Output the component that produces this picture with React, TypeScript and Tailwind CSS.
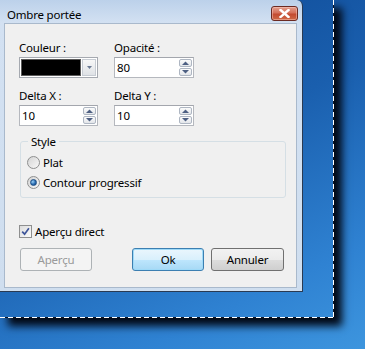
import type { ReactNode } from "react";

const txt = "text-[11.5px] leading-[15px] tracking-[-0.2px]";

function Arrow({ up }: { up?: boolean }) {
  return (
    <svg width="7" height="4" viewBox="0 0 7 4" className="block">
      {up ? (
        <path d="M0 4 L3.5 0.5 L7 4Z" fill="#4d5f82" />
      ) : (
        <path d="M0 0 L3.5 3.5 L7 0Z" fill="#4d5f82" />
      )}
    </svg>
  );
}

function SpinBox({ value }: { value: string }) {
  return (
    <div className="flex h-[21px] items-stretch border border-[#b5b8be] border-t-[#a3a6ad] bg-white">
      <span className={`flex-1 pl-[2px] text-black ${txt} leading-[19px]`}>{value}</span>
      <div className="flex flex-col justify-center gap-px py-px pr-px">
        <div className="flex h-[8px] w-[13px] items-center justify-center rounded-[2px] border border-[#aeb6c2] bg-[linear-gradient(to_bottom,#fbfbfb,#e3e6ea)]">
          <Arrow up />
        </div>
        <div className="flex h-[8px] w-[13px] items-center justify-center rounded-[2px] border border-[#aeb6c2] bg-[linear-gradient(to_bottom,#fbfbfb,#e3e6ea)]">
          <Arrow />
        </div>
      </div>
    </div>
  );
}

function Field({ label, children }: { label: string; children: ReactNode }) {
  return (
    <div className="flex flex-col">
      <span className={`text-black ${txt}`}>{label}</span>
      <div className="mt-[2px]">{children}</div>
    </div>
  );
}

function Radio({ checked, label }: { checked?: boolean; label: string }) {
  return (
    <div className="flex h-[15px] items-center gap-[3px]">
      <span className="flex h-[13px] w-[13px] items-center justify-center rounded-full border border-[#8e8f8f] bg-[linear-gradient(135deg,#d4d4d4,#f8f8f8)]">
        {checked && (
          <span className="h-[7px] w-[7px] rounded-full border border-[#1d4f86] bg-[radial-gradient(circle_at_35%_35%,#9bd0f5,#2a6db3_55%,#133f75)]" />
        )}
      </span>
      <span className={`text-black ${txt}`}>{label}</span>
    </div>
  );
}

function Button({
  children,
  variant,
  className,
}: {
  children: ReactNode;
  variant: "normal" | "default" | "disabled";
  className?: string;
}) {
  const look = {
    normal:
      "border-[#707070] bg-[linear-gradient(to_bottom,#f2f2f2_0%,#ebebeb_50%,#dddddd_51%,#cfcfcf_100%)] text-black",
    default:
      "border-[#3c7fb1] bg-[linear-gradient(to_bottom,#eaf6fd_0%,#d9f0fc_50%,#bee6fd_51%,#a7d9f5_100%)] text-black shadow-[inset_0_0_0_1px_#9fdaf8]",
    disabled: "border-[#adb2b5] bg-[#f4f4f4] text-[#9a9a9a]",
  }[variant];
  return (
    <div
      className={`flex h-[23px] items-center justify-center rounded-[3px] border ${txt} ${look} ${className ?? ""}`}
    >
      {children}
    </div>
  );
}

export default function App() {
  return (
    <div className="relative h-[349px] w-[365px] overflow-hidden bg-[linear-gradient(155deg,#0c4590_0%,#1a5fae_45%,#2f82d2_80%,#3d95de_100%)] font-['Noto_Sans',sans-serif]">
      {/* selection rectangle with drop shadow */}
      <div className="absolute left-0 top-0 h-[318px] w-[334px] shadow-[8px_8px_8px_rgba(2,8,20,1)]">
        <div className="absolute right-0 top-0 h-full w-px bg-[repeating-linear-gradient(to_bottom,#ffffff_0_5px,#0b1526_5px_8px)]" />
        <div className="absolute bottom-0 left-0 h-px w-full bg-[repeating-linear-gradient(to_right,#ffffff_0_5px,#0b1526_5px_8px)]" />
      </div>

      {/* dialog window */}
      <div className="absolute left-0 top-0 flex h-[292px] w-[303px] flex-col rounded-tr-[6px] border-b border-r border-[#2a3a52] bg-[linear-gradient(to_bottom,#bcd1ea_0px,#d3e1f2_23px,#cfdeef_100%)]">
        {/* title bar */}
        <div className="flex h-[23px] items-start justify-between pl-[7px]">
          <span className={`mt-[7px] text-black ${txt}`}>Ombre portée</span>
          <div className="mr-[4px] mt-[6px] flex h-[15px] w-[27px] items-center justify-center rounded-[3px] border border-[#6b2a22] bg-[linear-gradient(to_bottom,#e3a08f_0%,#d5705a_45%,#c34a30_55%,#cf6a48_100%)] shadow-[inset_0_0_0_1px_rgba(255,210,200,0.45)]">
            <svg width="11" height="9" viewBox="0 0 11 9">
              <path
                d="M1.5 1 L9.5 8 M9.5 1 L1.5 8"
                stroke="#ffffff"
                strokeWidth="2.4"
                strokeLinecap="square"
              />
            </svg>
          </div>
        </div>

        {/* client area */}
        <div className="mb-[3px] ml-[4px] mr-[5px] flex flex-1 flex-col border border-[#a9b9cc] bg-[#f0f0f0] pl-[14px] pt-[16px]">
          <div className="grid grid-cols-[79px_80px] gap-x-[16px] gap-y-[10px]">
            <Field label="Couleur :">
              <div className="flex h-[21px] border border-[#a5a9b0] bg-white p-px">
                <div className="flex-1 border border-[#5a5a5a] bg-black" />
                <div className="ml-px flex w-[14px] items-center justify-center border border-[#c7ccd3] bg-[linear-gradient(to_bottom,#f7f7f7,#dfe2e6)]">
                  <svg width="5" height="3" viewBox="0 0 5 3">
                    <path d="M0 0 L2.5 3 L5 0Z" fill="#6b7a93" />
                  </svg>
                </div>
              </div>
            </Field>
            <Field label="Opacité :">
              <SpinBox value="80" />
            </Field>
            <Field label="Delta X :">
              <SpinBox value="10" />
            </Field>
            <Field label="Delta Y :">
              <SpinBox value="10" />
            </Field>
          </div>

          <fieldset className="ml-[1px] mt-[8px] w-[266px] rounded-[3px] border border-[#d5dfe5] pb-[7px] pl-[6px]">
            <legend className={`ml-[1px] px-[3px] text-black ${txt}`}>Style</legend>
            <div className="mt-[6px] flex flex-col gap-[5px]">
              <Radio label="Plat" />
              <Radio checked label="Contour progressif" />
            </div>
          </fieldset>

          <div className="mt-[26px] flex h-[15px] items-center gap-[3px]">
            <span className="flex h-[13px] w-[13px] items-center justify-center border border-[#8e8f8f] bg-[linear-gradient(135deg,#dcdcdc,#fbfbfb)]">
              <svg width="9" height="9" viewBox="0 0 9 9">
                <path d="M1.2 4.6 L3.6 7.2 L7.9 1.3" fill="none" stroke="#3e559a" strokeWidth="1.7" />
              </svg>
            </span>
            <span className={`text-black ${txt}`}>Aperçu direct</span>
          </div>

          <div className="mt-[9px] flex">
            <Button variant="disabled" className="ml-[1px] w-[72px]">
              Aperçu
            </Button>
            <Button variant="default" className="ml-[40px] w-[72px]">
              Ok
            </Button>
            <Button variant="normal" className="ml-[7px] w-[73px]">
              Annuler
            </Button>
          </div>
        </div>
      </div>
    </div>
  );
}
